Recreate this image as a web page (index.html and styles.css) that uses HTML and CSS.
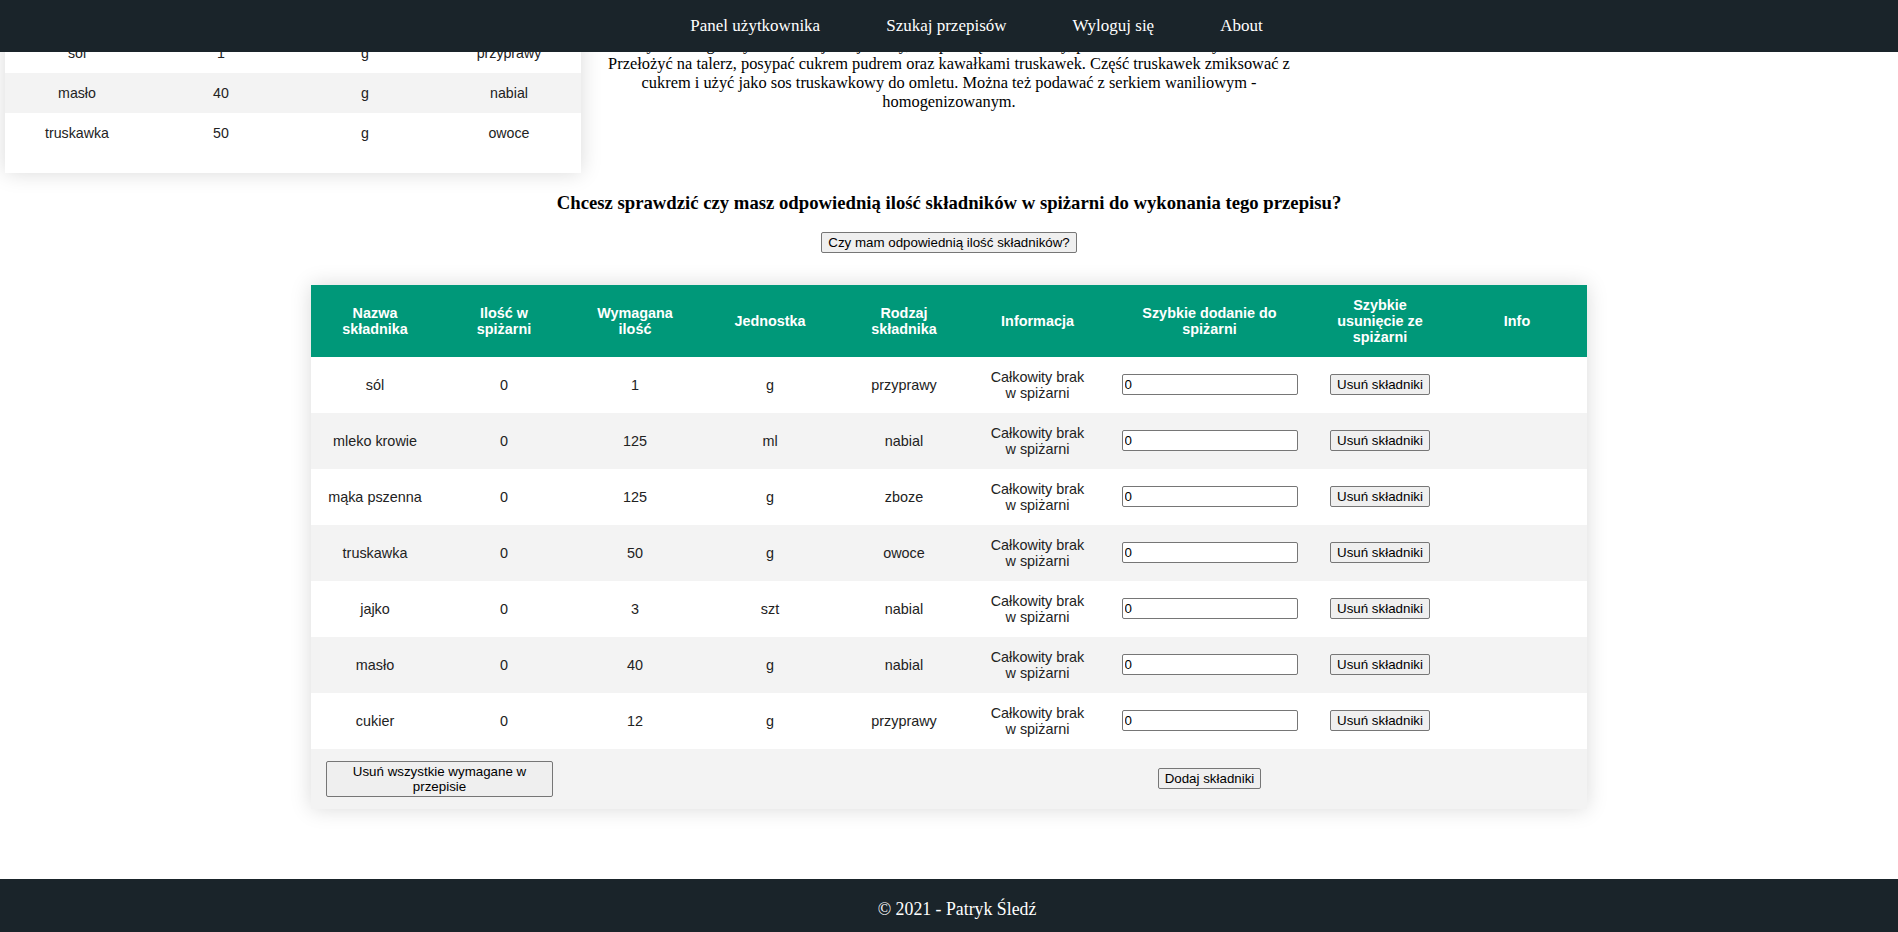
FILE: index.html
```html
<!DOCTYPE html>
<html lang="pl">
<head>
<meta charset="utf-8">
<title>Przepis</title>
<link rel="stylesheet" href="styles.css">
</head>
<body>
<nav class="topnav">
  <ul class="topnav-list">
    <li><a href="#">Panel użytkownika</a></li>
    <li><a href="#">Szukaj przepisów</a></li>
    <li><a href="#">Wyloguj się</a></li>
    <li><a href="#">About</a></li>
  </ul>
</nav>

<main class="page">
  <section class="recipe-top">
    <div class="ingredients-card">
      <table class="ingredients-table">
        <tbody>
          <tr><td>sól</td><td>1</td><td>g</td><td>przyprawy</td></tr>
          <tr><td>masło</td><td>40</td><td>g</td><td>nabial</td></tr>
          <tr><td>truskawka</td><td>50</td><td>g</td><td>owoce</td></tr>
        </tbody>
      </table>
    </div>
    <p class="recipe-desc">Smażyć na rozgrzanym maśle z jednej strony, aż spód będzie rumiany, przewrócić i dosmażyć na złoto. Przełożyć na talerz, posypać cukrem pudrem oraz kawałkami truskawek. Część truskawek zmiksować z cukrem i użyć jako sos truskawkowy do omletu. Można też podawać z serkiem waniliowym - homogenizowanym.</p>
  </section>

  <h3 class="check-title">Chcesz sprawdzić czy masz odpowiednią ilość składników w spiżarni do wykonania tego przepisu?</h3>
  <div class="check-action">
    <button class="btn">Czy mam odpowiednią ilość składników?</button>
  </div>

  <table class="styled-table">
    <colgroup>
      <col class="c1"><col class="c2"><col class="c3"><col class="c4"><col class="c5"><col class="c6"><col class="c7"><col class="c8"><col class="c9">
    </colgroup>
    <thead>
      <tr>
        <th>Nazwa składnika</th>
        <th>Ilość w spiżarni</th>
        <th>Wymagana ilość</th>
        <th>Jednostka</th>
        <th>Rodzaj składnika</th>
        <th>Informacja</th>
        <th>Szybkie dodanie do spiżarni</th>
        <th>Szybkie usunięcie ze spiżarni</th>
        <th>Info</th>
      </tr>
    </thead>
    <tbody>
      <tr><td>sól</td><td>0</td><td>1</td><td>g</td><td>przyprawy</td><td>Całkowity brak w spiżarni</td><td><input class="qty" type="text" value="0"></td><td><button class="btn">Usuń składniki</button></td><td></td></tr>
      <tr><td>mleko krowie</td><td>0</td><td>125</td><td>ml</td><td>nabial</td><td>Całkowity brak w spiżarni</td><td><input class="qty" type="text" value="0"></td><td><button class="btn">Usuń składniki</button></td><td></td></tr>
      <tr><td>mąka pszenna</td><td>0</td><td>125</td><td>g</td><td>zboze</td><td>Całkowity brak w spiżarni</td><td><input class="qty" type="text" value="0"></td><td><button class="btn">Usuń składniki</button></td><td></td></tr>
      <tr><td>truskawka</td><td>0</td><td>50</td><td>g</td><td>owoce</td><td>Całkowity brak w spiżarni</td><td><input class="qty" type="text" value="0"></td><td><button class="btn">Usuń składniki</button></td><td></td></tr>
      <tr><td>jajko</td><td>0</td><td>3</td><td>szt</td><td>nabial</td><td>Całkowity brak w spiżarni</td><td><input class="qty" type="text" value="0"></td><td><button class="btn">Usuń składniki</button></td><td></td></tr>
      <tr><td>masło</td><td>0</td><td>40</td><td>g</td><td>nabial</td><td>Całkowity brak w spiżarni</td><td><input class="qty" type="text" value="0"></td><td><button class="btn">Usuń składniki</button></td><td></td></tr>
      <tr><td>cukier</td><td>0</td><td>12</td><td>g</td><td>przyprawy</td><td>Całkowity brak w spiżarni</td><td><input class="qty" type="text" value="0"></td><td><button class="btn">Usuń składniki</button></td><td></td></tr>
      <tr class="actions-row">
        <td colspan="2" class="left"><button class="btn btn-wide">Usuń wszystkie wymagane w przepisie</button></td>
        <td colspan="4"></td>
        <td><button class="btn">Dodaj składniki</button></td>
        <td colspan="2"></td>
      </tr>
    </tbody>
  </table>
</main>

<footer class="site-footer">© 2021 - Patryk Śledź</footer>
</body>
</html>
```

FILE: styles.css
```css
* { box-sizing: border-box; }

html, body {
  margin: 0;
  padding: 0;
  background: #ffffff;
}

body {
  font-family: "Liberation Serif", "Times New Roman", serif;
  font-size: 16px;
  color: #000;
}

/* fixed navigation bar lying over the scrolled content */
.topnav {
  position: fixed;
  top: 0;
  left: 0;
  right: 0;
  height: 52px;
  background: #1a242a;
  z-index: 10;
}

.topnav-list {
  list-style: none;
  margin: 0;
  padding: 0 0 1px 55px;
  height: 100%;
  display: flex;
  justify-content: center;
  align-items: center;
  gap: 66px;
}

.topnav-list a {
  color: #ffffff;
  text-decoration: none;
  font-size: 17px;
}

.page {
  padding-top: 33px;
}

/* top area: ingredient card + description */
.recipe-top {
  display: grid;
  grid-template-columns: 576px 720px;
  column-gap: 8px;
  padding-left: 5px;
  align-items: start;
}

.ingredients-card {
  background: #fff;
  padding-bottom: 20px;
  box-shadow: 0 0 20px rgba(0, 0, 0, 0.15);
}

.ingredients-table {
  width: 100%;
  border-collapse: collapse;
  table-layout: fixed;
  font-family: "Liberation Sans", Arial, sans-serif;
  font-size: 14.2px;
  color: #222;
}

.ingredients-table td {
  padding: 12px 15px;
  text-align: center;
  line-height: 16px;
}

.ingredients-table tr:nth-child(even) {
  background: #f3f3f3;
}

.recipe-desc {
  margin: 2px 0 0;
  text-align: center;
  font-size: 16.4px;
  line-height: 19px;
}

.check-title {
  margin: 19px 0 18px;
  text-align: center;
  font-size: 18.72px;
  font-weight: bold;
  line-height: 21.5px;
}

.check-action {
  text-align: center;
}

.btn {
  font-family: "Liberation Sans", Arial, sans-serif;
  font-size: 13.333px;
  color: #000;
  background: #efefef;
  border: 1px solid #767676;
  border-radius: 2px;
  padding: 2px 6px;
  line-height: 15px;
}

.btn-wide {
  width: 227px;
}

/* main table */
.styled-table {
  width: 1276px;
  margin: 32px auto 0;
  border-collapse: collapse;
  table-layout: fixed;
  font-family: "Liberation Sans", Arial, sans-serif;
  font-size: 14.4px;
  color: #222;
  box-shadow: 0 0 20px rgba(0, 0, 0, 0.15);
}

.styled-table .c1 { width: 128px; }
.styled-table .c2 { width: 130px; }
.styled-table .c3 { width: 132px; }
.styled-table .c4 { width: 138px; }
.styled-table .c5 { width: 130px; }
.styled-table .c6 { width: 137px; }
.styled-table .c7 { width: 207px; }
.styled-table .c8 { width: 134px; }
.styled-table .c9 { width: 140px; }

.styled-table thead tr {
  background: #009879;
  color: #ffffff;
}

.styled-table th,
.styled-table td {
  padding: 12px 15px;
  text-align: center;
  vertical-align: middle;
  line-height: 16px;
}

.styled-table th {
  font-weight: bold;
}

.styled-table tbody tr:nth-of-type(even) {
  background: #f3f3f3;
}

.styled-table td.left {
  text-align: left;
}

.qty {
  width: 176px;
  height: 21px;
  font-family: "Liberation Sans", Arial, sans-serif;
  font-size: 13.333px;
  border: 1px solid #767676;
  border-radius: 2px;
  padding: 1px 2px;
  background: #fff;
  color: #000;
}

.site-footer {
  margin-top: 70px;
  height: 53px;
  background: #1a242a;
  color: #ffffff;
  text-align: center;
  font-size: 17.8px;
  line-height: 20px;
  padding: 20px 0 0 16px;
}
```
